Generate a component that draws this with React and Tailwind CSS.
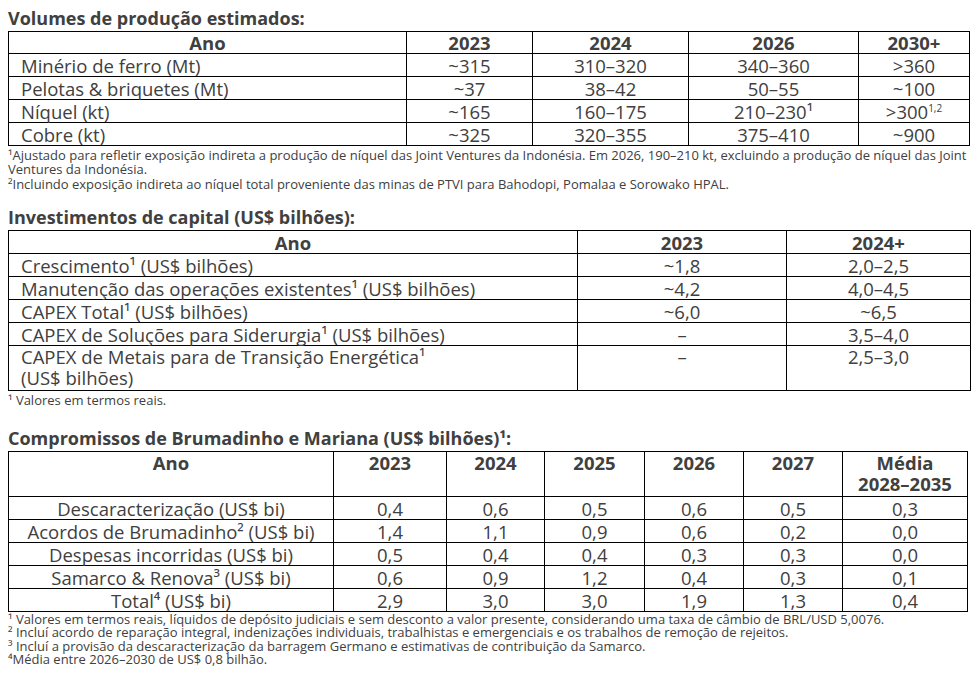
const font = { fontFamily: "'Open Sans', 'Noto Sans', sans-serif" };

const producao = [
  ["Minério de ferro (Mt)", "~315", "310–320", "340–360", ">360"],
  ["Pelotas & briquetes (Mt)", "~37", "38–42", "50–55", "~100"],
  ["Níquel (kt)", "~165", "160–175", "210–230¹", "__300"],
  ["Cobre (kt)", "~325", "320–355", "375–410", "~900"],
];

const capex = [
  ["Crescimento¹ (US$ bilhões)", "~1,8", "2,0–2,5"],
  ["Manutenção das operações existentes¹ (US$ bilhões)", "~4,2", "4,0–4,5"],
  ["CAPEX Total¹ (US$ bilhões)", "~6,0", "~6,5"],
  ["CAPEX de Soluções para Siderurgia¹ (US$ bilhões)", "–", "3,5–4,0"],
];

const compromissos = [
  ["Descaracterização (US$ bi)", "0,4", "0,6", "0,5", "0,6", "0,5", "0,3"],
  ["Acordos de Brumadinho² (US$ bi)", "1,4", "1,1", "0,9", "0,6", "0,2", "0,0"],
  ["Despesas incorridas (US$ bi)", "0,5", "0,4", "0,4", "0,3", "0,3", "0,0"],
  ["Samarco & Renova³ (US$ bi)", "0,6", "0,9", "1,2", "0,4", "0,3", "0,1"],
  ["Total⁴ (US$ bi)", "2,9", "3,0", "3,0", "1,9", "1,3", "0,4"],
];

function Cell({ children, className = "" }) {
  return (
    <td className={"border border-black p-0 text-center text-[18.5px] leading-[21px] " + className}>
      {children}
    </td>
  );
}

function Title({ children }) {
  return <h2 className="text-[18px] font-bold leading-[22px] mb-[2px]">{children}</h2>;
}

export default function App() {
  return (
    <div className="w-[978px] h-[682px] bg-white text-[#404040] pl-2 pt-[7px]" style={font}>
      {/* Volumes de produção */}
      <Title>Volumes de produção estimados:</Title>
      <table className="table-fixed border-collapse w-[961px]">
        <colgroup>
          <col className="w-[398px]" />
          <col className="w-[126px]" />
          <col className="w-[156px]" />
          <col className="w-[170px]" />
          <col className="w-[111px]" />
        </colgroup>
        <thead>
          <tr className="h-[22px] font-bold">
            <Cell>Ano</Cell>
            <Cell>2023</Cell>
            <Cell>2024</Cell>
            <Cell>2026</Cell>
            <Cell>2030+</Cell>
          </tr>
        </thead>
        <tbody>
          {producao.map((r) => (
            <tr key={r[0]} className="h-[23px]">
              <Cell className="text-left pl-3">{r[0]}</Cell>
              <Cell>{r[1]}</Cell>
              <Cell>{r[2]}</Cell>
              <Cell>{r[3]}</Cell>
              <Cell>
                {r[4] === "__300" ? (
                  <>
                    &gt;300<sup className="text-[10px] leading-none -top-[7px]">1,2</sup>
                  </>
                ) : (
                  r[4]
                )}
              </Cell>
            </tr>
          ))}
        </tbody>
      </table>
      <div className="w-[962px] text-[13px] leading-[14px] pt-[2px]">
        <p>
          ¹Ajustado para refletir exposição indireta a produção de níquel das Joint Ventures da Indonésia. Em 2026,
          190–210 kt, excluindo a produção de níquel das Joint Ventures da Indonésia.
        </p>
        <p className="mt-px">
          ²Incluindo exposição indireta ao níquel total proveniente das minas de PTVI para Bahodopi, Pomalaa e Sorowako
          HPAL.
        </p>
      </div>

      {/* Investimentos */}
      <div className="mt-[15px]">
        <Title>Investimentos de capital (US$ bilhões):</Title>
      </div>
      <table className="table-fixed border-collapse w-[962px]">
        <colgroup>
          <col className="w-[569px]" />
          <col className="w-[209px]" />
          <col className="w-[184px]" />
        </colgroup>
        <thead>
          <tr className="h-[23px] font-bold">
            <Cell>Ano</Cell>
            <Cell>2023</Cell>
            <Cell>2024+</Cell>
          </tr>
        </thead>
        <tbody>
          {capex.map((r) => (
            <tr key={r[0]} className="h-[23px]">
              <Cell className="text-left pl-3">{r[0]}</Cell>
              <Cell>{r[1]}</Cell>
              <Cell>{r[2]}</Cell>
            </tr>
          ))}
          <tr className="h-[45px]">
            <Cell className="text-left pl-3 align-top">
              CAPEX de Metais para de Transição Energética¹
              <br />
              (US$ bilhões)
            </Cell>
            <Cell className="align-top">–</Cell>
            <Cell className="align-top">2,5–3,0</Cell>
          </tr>
        </tbody>
      </table>
      <p className="text-[13px] leading-[14px] pt-[2px]">¹ Valores em termos reais.</p>

      {/* Compromissos */}
      <div className="mt-[20px]">
        <Title>Compromissos de Brumadinho e Mariana (US$ bilhões)¹:</Title>
      </div>
      <table className="table-fixed border-collapse w-[959px]">
        <colgroup>
          <col className="w-[325px]" />
          <col className="w-[113px]" />
          <col className="w-[98px]" />
          <col className="w-[100px]" />
          <col className="w-[99px]" />
          <col className="w-[99px]" />
          <col className="w-[125px]" />
        </colgroup>
        <thead>
          <tr className="h-[45px] font-bold">
            <Cell className="align-top">Ano</Cell>
            <Cell className="align-top">2023</Cell>
            <Cell className="align-top">2024</Cell>
            <Cell className="align-top">2025</Cell>
            <Cell className="align-top">2026</Cell>
            <Cell className="align-top">2027</Cell>
            <Cell className="align-top">
              Média
              <br />
              2028–2035
            </Cell>
          </tr>
        </thead>
        <tbody>
          {compromissos.map((r) => (
            <tr key={r[0]} className="h-[23px]">
              {r.map((v, i) => (
                <Cell key={i}>{v}</Cell>
              ))}
            </tr>
          ))}
        </tbody>
      </table>
      <div className="text-[13px] leading-[13.4px] pt-[1px]">
        <p>
          ¹ Valores em termos reais, líquidos de depósito judiciais e sem desconto a valor presente, considerando uma
          taxa de câmbio de BRL/USD 5,0076.
        </p>
        <p>² Incluí acordo de reparação integral, indenizações individuais, trabalhistas e emergenciais e os trabalhos de remoção de rejeitos.</p>
        <p>³ Incluí a provisão da descaracterização da barragem Germano e estimativas de contribuição da Samarco.</p>
        <p>⁴Média entre 2026–2030 de US$ 0,8 bilhão.</p>
      </div>
    </div>
  );
}
